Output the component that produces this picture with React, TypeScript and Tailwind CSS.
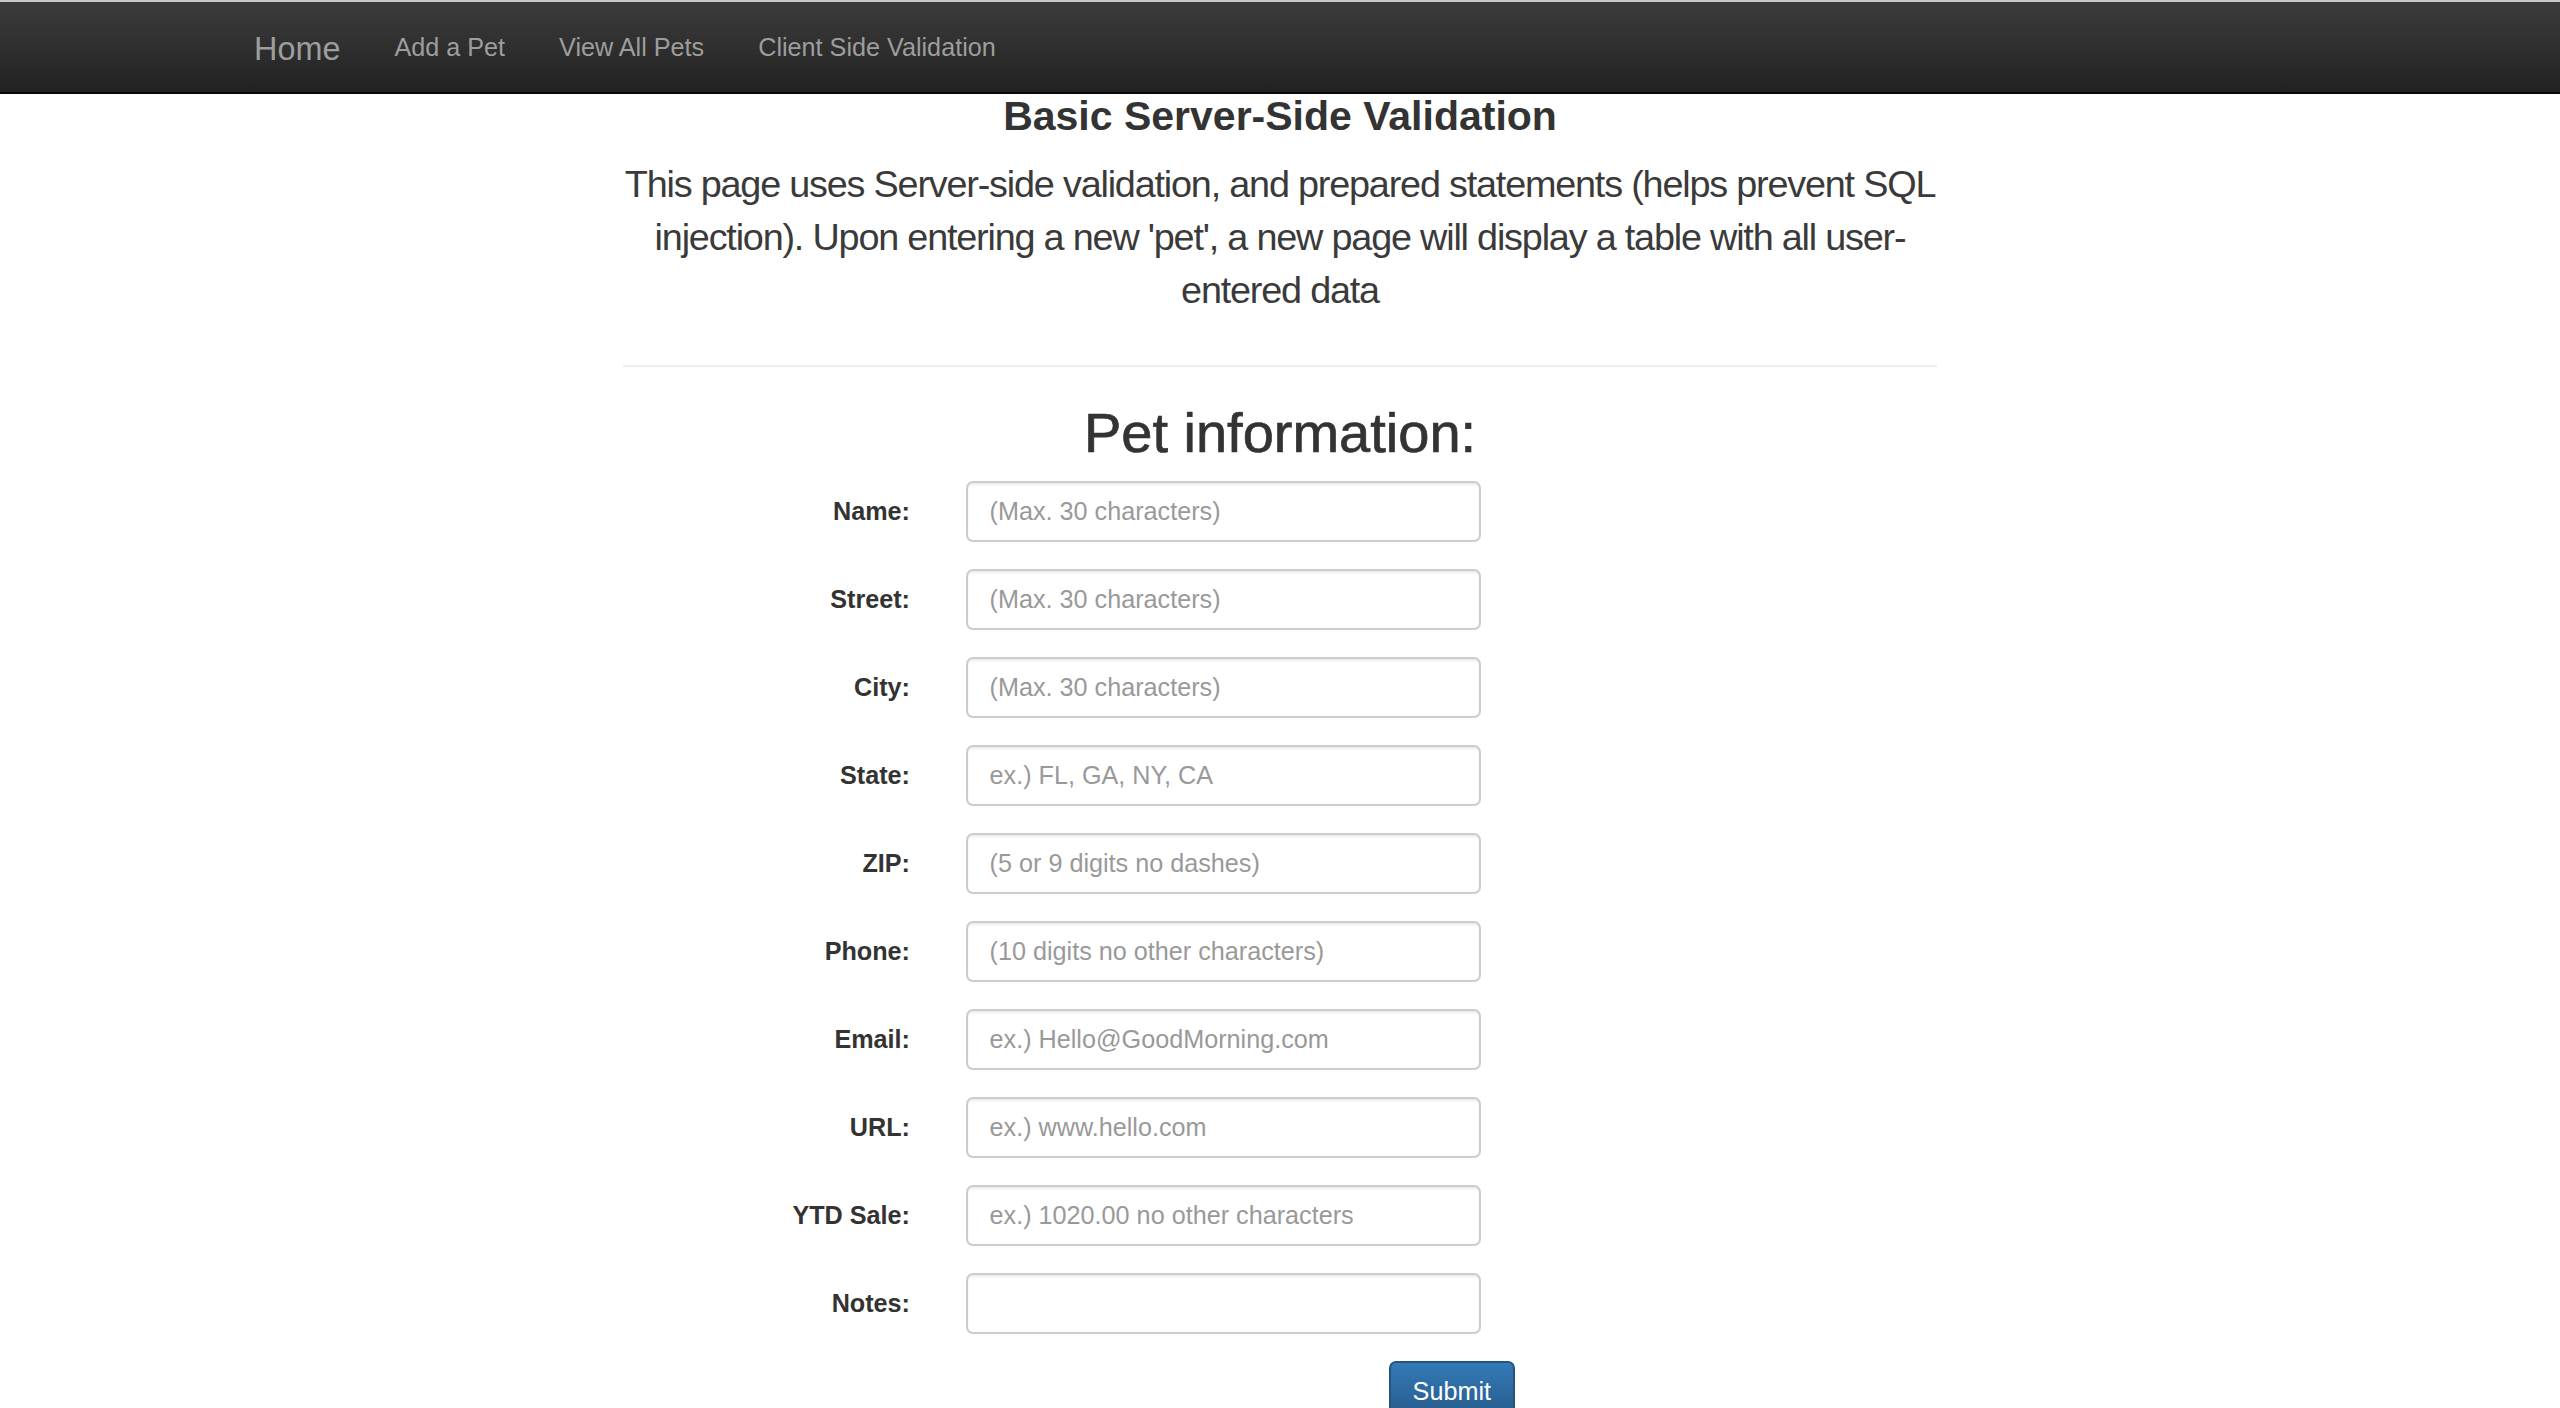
import React from "react";

const fields: { label: string; placeholder: string }[] = [
  { label: "Name:", placeholder: "(Max. 30 characters)" },
  { label: "Street:", placeholder: "(Max. 30 characters)" },
  { label: "City:", placeholder: "(Max. 30 characters)" },
  { label: "State:", placeholder: "ex.) FL, GA, NY, CA" },
  { label: "ZIP:", placeholder: "(5 or 9 digits no dashes)" },
  { label: "Phone:", placeholder: "(10 digits no other characters)" },
  { label: "Email:", placeholder: "ex.) Hello@GoodMorning.com" },
  { label: "URL:", placeholder: "ex.) www.hello.com" },
  { label: "YTD Sale:", placeholder: "ex.) 1020.00 no other characters" },
  { label: "Notes:", placeholder: "" },
];

export default function App() {
  return (
    <div className="h-[1408px] overflow-hidden bg-white font-['Liberation_Sans',Arial,sans-serif] text-[#333]">
      <div className="h-[2px] bg-[#c8c8c8]" />
      <nav className="h-[92px] border-b-2 border-[#080808] bg-linear-to-b from-[#3c3c3c] to-[#222222]">
        <div className="mx-auto flex w-[2106px] px-[27px]">
          <a className="block pt-[29px] pr-[27px] text-[32.4px] leading-[36px] text-[#9d9d9d]">Home</a>
          <ul className="flex">
            {["Add a Pet", "View All Pets", "Client Side Validation"].map((t) => (
              <li key={t}>
                <a className="block px-[27px] pt-[27px] text-[25.2px] leading-[36px] text-[#9d9d9d]">{t}</a>
              </li>
            ))}
          </ul>
        </div>
      </nav>

      <div className="mx-auto w-[1314px]">
        <h3 className="text-center text-[41px] font-bold leading-[45px] text-[#333]">Basic Server-Side Validation</h3>
        <div className="-mx-[120px]">
          <p className="mt-[19px] whitespace-nowrap text-center text-[37.8px] font-light leading-[52.9px] tracking-[-1.2px] text-[#3a3a3a]">
            This page uses Server-side validation, and prepared statements (helps prevent SQL
            <br />
            injection). Upon entering a new 'pet', a new page will display a table with all user-
            <br />
            entered data
          </p>
        </div>
        <hr className="mt-[48px] border-0 border-t-2 border-[#eeeeee]" />
        <h2 className="mt-[35px] text-center text-[56px] font-medium leading-[62px] text-[#333] [-webkit-text-stroke:0.7px_#333]">
          Pet information:
        </h2>

        <form className="mt-[17px]">
          {fields.map((f) => (
            <div key={f.label} className="mb-[27px] flex h-[61px] items-center">
              <label className="w-[287px] text-right text-[25.2px] font-bold leading-[36px] text-[#333]">{f.label}</label>
              <input
                type="text"
                placeholder={f.placeholder}
                className="ml-[56px] h-[61px] w-[515px] rounded-[7px] border-2 border-[#cccccc] bg-white px-[21.6px] text-[25.2px] leading-[36px] text-[#555] shadow-[inset_0_2px_2px_rgba(0,0,0,0.075)] outline-none placeholder:text-[#999999]"
              />
            </div>
          ))}
          <div className="flex">
            <button
              type="button"
              className="ml-[766px] h-[61px] rounded-[7px] border-2 border-[#245580] bg-linear-to-b from-[#337ab7] to-[#265a88] px-[21.6px] text-[25.2px] leading-[36px] text-white"
            >
              Submit
            </button>
          </div>
        </form>
      </div>
    </div>
  );
}
